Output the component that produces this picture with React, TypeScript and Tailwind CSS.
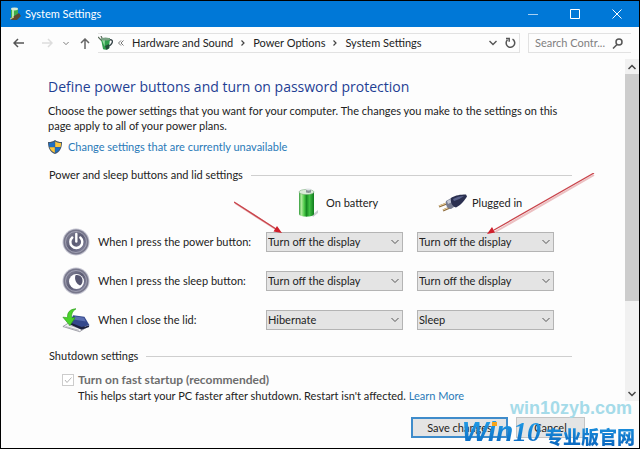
import { useState } from "react";
import type { ReactNode } from "react";

type Option = "Turn off the display" | "Sleep" | "Hibernate" | "Do nothing";

const options: Option[] = [
  "Turn off the display",
  "Sleep",
  "Hibernate",
  "Do nothing",
];

const BatteryIcon = ({ className }: { className?: string }) => (
  <svg viewBox="0 0 20 30" className={className} aria-hidden="true">
    <defs>
      <linearGradient id="cell" x1="0" x2="1">
        <stop offset="0" stopColor="#2f9a38" />
        <stop offset="0.15" stopColor="#b4eca0" />
        <stop offset="0.35" stopColor="#4cca48" />
        <stop offset="0.5" stopColor="#178a22" />
        <stop offset="0.7" stopColor="#3fc043" />
        <stop offset="1" stopColor="#0f7a1c" />
      </linearGradient>
    </defs>
    <path d="M14 27l6-5v3l-5 4z" fill="#c9ccd0" />
    <path d="M1 4v22c0 3.500 15 3.500 15 0V4z" fill="url(#cell)" />
    <ellipse cx="8.500" cy="4" rx="7.500" ry="2.600" fill="#dcebda" stroke="#7fae82" strokeWidth="0.600" />
    <path d="M8 1.500v2.500c0 1.200 5 1.200 5 0V1.500z" fill="#8a9299" />
    <ellipse cx="10.500" cy="1.500" rx="2.500" ry="1" fill="#dfe3e6" />
  </svg>
);

const PlugIcon = () => (
  <svg viewBox="0 0 30 18" className="h-[18px] w-[30px]" aria-hidden="true">
    <path d="M10 9L1 12.500M13 13L5 16.500" stroke="#8c6a3c" strokeWidth="2" />
    <path d="M10 8.500L1 12M13 12.500L5 16" stroke="#f0d8a4" strokeWidth="1" />
    <path d="M8 7l7-4 4 8-6 4c-4 0-6-5-5-8z" fill="#777c90" />
    <path d="M9 7l6-3 1 3-6 3z" fill="#c3c7d4" />
    <path d="M13 4c5-3 9-3.500 15-3.500l1 2c-2 3-5 8-11 11-4-1-6-6-5-9.500z" fill="#2b3050" />
    <path d="M15 5c4-2 7-3 11-3-3 2-6 4-10 5z" fill="#59618a" />
  </svg>
);

const RoundIcon = ({ children }: { children: ReactNode }) => (
  <svg viewBox="0 0 28 28" className="size-7" aria-hidden="true">
    <defs>
      <linearGradient id="disc" x1="0" y1="0" x2="1" y2="1">
        <stop offset="0" stopColor="#8a8a9c" />
        <stop offset="0.5" stopColor="#5b5b73" />
        <stop offset="1" stopColor="#8d8da6" />
      </linearGradient>
    </defs>
    <circle cx="14" cy="14" r="13.500" fill="#c3c3d0" />
    <circle cx="14" cy="14" r="12.500" fill="#77778b" />
    <circle cx="14" cy="14" r="10.500" fill="url(#disc)" stroke="#a9a9bb" strokeWidth="0.800" />
    {children}
  </svg>
);

const PowerIcon = () => (
  <RoundIcon>
    <path d="M10.300 9.500a6 6 0 1 0 8 0" fill="none" stroke="#fff" strokeWidth="2.400" strokeLinecap="round" />
    <path d="M14.300 6v7.500" stroke="#fff" strokeWidth="2.400" strokeLinecap="round" />
  </RoundIcon>
);

const SleepIcon = () => (
  <RoundIcon>
    <circle cx="14.500" cy="14.500" r="7.500" fill="#fff" />
    <path d="M13.500 8.200c4-1 7.500 2 7 6.300-.3 2.500-1.500 3.500-2.500 4-3.500-1.500-6-6-4.500-10.300z" fill="#565670" />
  </RoundIcon>
);

const LidIcon = () => (
  <svg viewBox="0 0 30 26" className="h-[26px] w-[30px]" aria-hidden="true">
    <path d="M1 20l8-5 17 6-7 4.500z" fill="#f4f4f6" stroke="#85858f" strokeWidth="0.800" />
    <path d="M4 20l14 4M7 18.500l14 4" stroke="#a5a5af" strokeWidth="0.800" />
    <path d="M8 15l17 5 4-1.500v2l-8 3-13-6z" fill="#1c2140" />
    <path d="M12 8l12 1.500 5.500 9-8.500 2-13-5z" fill="#34488c" />
    <path d="M14 9l9.500 1.500 2 4-13-2z" fill="#5a6eb0" />
    <path d="M15 1C8 1.500 5.500 5 6 10.500L1 10l7.500 9L14 10.500l-3.500.300C9.800 7 11 3.500 15 1z" fill="#4ad32c" stroke="#2a9c17" strokeWidth="0.700" />
  </svg>
);

const ShieldIcon = () => (
  <svg viewBox="0 0 14 14" className="size-[14px]" aria-hidden="true">
    <path d="M7 0c2 1.500 4 2 7 2 0 6-2 10-7 12C2 12 0 8 0 2c3 0 5-.5 7-2z" fill="#44566b" />
    <path d="M6.800 1.400V7H1.400C1 5.500 1 4.200 1 3c2.200 0 4-.5 5.800-1.600z" fill="#1c6fc4" />
    <path d="M7.200 1.400V7h5.400c.4-1.500.4-2.800.4-4-2.200 0-4-.5-5.800-1.600z" fill="#fbc63c" />
    <path d="M1.500 7.300h5.300v5.500C4 11.500 2.300 9.800 1.500 7.300z" fill="#fbc63c" />
    <path d="M12.500 7.300H7.200v5.500c2.800-1.300 4.500-3 5.300-5.500z" fill="#1c6fc4" />
  </svg>
);

const PowerOptionsIcon = () => (
  <svg viewBox="0 0 15 15" className="size-[15px]" aria-hidden="true">
    <path d="M0 1l4 4M3 0l2 4" stroke="#5a6a5a" strokeWidth="1.200" />
    <path d="M11 4c3-1 4 1 3 3s-3 3-4 3" fill="none" stroke="#39464a" strokeWidth="1.400" />
    <path d="M3 3l9-1-1 10c-1 2-5 2-6 1z" fill="#2f9e4c" />
    <path d="M4 4l3-.5-.5 7z" fill="#93dba0" />
    <ellipse cx="7.500" cy="3" rx="4.500" ry="1.500" fill="#79a183" />
    <path d="M7 10l4-2 .500 4-3 2z" fill="#23503a" />
  </svg>
);

const TitleIcon = () => (
  <svg viewBox="0 0 12 14" className="h-[14px] w-3" aria-hidden="true">
    <path d="M2 2v9c0 2 7 2 7 0V2z" fill="#3fae4d" />
    <path d="M3 3v8l2 1V3z" fill="#b5ebb0" />
    <ellipse cx="5.500" cy="2" rx="3.500" ry="1.400" fill="#d8ecd6" />
    <path d="M5 9l5-3 2 3-4 4H2z" fill="#5b4a32" />
    <path d="M1 12l4-2" stroke="#e2c184" />
  </svg>
);

const Chevron = ({ className }: { className?: string }) => (
  <svg viewBox="0 0 8 6" className={className} fill="none" stroke="currentColor" aria-hidden="true">
    <path d="M0.500 1L4 4.500 7.500 1" />
  </svg>
);

type ActionSelectProps = { label: string; initial: Option };

const ActionSelect = ({ label, initial }: ActionSelectProps) => {
  const [value, setValue] = useState<string>(initial);
  return (
    <div className="relative">
      <select
        aria-label={label}
        value={value}
        onChange={(e) => setValue(e.target.value)}
        className="block h-5 w-full appearance-none border border-[#b4b4b4] bg-[#e4e4e4] px-px text-[11px] leading-4 text-[#222]"
      >
        {options.map((option) => (
          <option key={option}>{option}</option>
        ))}
      </select>
      <Chevron className="pointer-events-none absolute top-[7px] right-1 h-[6px] w-2 text-[#555]" />
    </div>
  );
};

const rows: { label: string; icon: ReactNode; battery: Option; plugged: Option }[] = [
  {
    label: "When I press the power button:",
    icon: <PowerIcon />,
    battery: "Turn off the display",
    plugged: "Turn off the display",
  },
  {
    label: "When I press the sleep button:",
    icon: <SleepIcon />,
    battery: "Turn off the display",
    plugged: "Turn off the display",
  },
  {
    label: "When I close the lid:",
    icon: <LidIcon />,
    battery: "Hibernate",
    plugged: "Sleep",
  },
];

const TitleBar = () => (
  <header className="flex h-[26px] items-center bg-[#0078d7] pl-2 text-white">
    <TitleIcon />
    <h1 className="ml-1 flex-1">System Settings</h1>
    <button aria-label="Minimize" className="flex h-full w-11 items-center justify-center">
      <svg viewBox="0 0 10 10" className="size-[10px]" stroke="#a8d0f2">
        <path d="M0 5.500h10" />
      </svg>
    </button>
    <button aria-label="Maximize" className="flex h-full w-10 items-center justify-center">
      <svg viewBox="0 0 10 10" className="size-[10px]" fill="none" stroke="currentColor">
        <path d="M.5.5h9v9h-9z" />
      </svg>
    </button>
    <button aria-label="Close" className="flex h-full w-11 items-center justify-center">
      <svg viewBox="0 0 10 10" className="size-[10px]" stroke="currentColor">
        <path d="M.5.5l9 9M9.500.5l-9 9" />
      </svg>
    </button>
  </header>
);

const Arrow = ({ className, d = "M5 1L1 5l4 4M1 5h10" }: { className?: string; d?: string }) => (
  <svg viewBox="0 0 12 10" className={className} fill="none" stroke="currentColor" strokeWidth="1.500" aria-hidden="true">
    <path d={d} />
  </svg>
);

const Crumb = ({ children }: { children: ReactNode }) => (
  <a href="#" className="whitespace-nowrap">
    {children}
  </a>
);

const Separator = () => (
  <svg viewBox="0 0 4 6" className="mx-2 h-[6px] w-1" fill="none" stroke="#444" strokeWidth="1.200" aria-hidden="true">
    <path d="M.5.5L3 3 .5 5.500" />
  </svg>
);

const AddressBar = () => (
  <nav className="flex h-8 items-center pr-2 pl-3">
    <button aria-label="Back">
      <Arrow className="h-[10px] w-3 text-[#555]" />
    </button>
    <button aria-label="Forward" className="ml-4">
      <Arrow className="h-[10px] w-3 text-[#ddd]" d="M7 1l4 4-4 4M11 5H1" />
    </button>
    <button aria-label="Recent locations" className="ml-[10px]">
      <Chevron className="h-[5px] w-[6px] text-[#555]" />
    </button>
    <button aria-label="Up" className="ml-[11px]">
      <svg viewBox="0 0 10 11" className="h-[11px] w-[10px]" fill="none" stroke="#666" strokeWidth="1.500">
        <path d="M1 5l4-4 4 4M5 1v10" />
      </svg>
    </button>
    <div className="ml-2 flex h-5 min-w-0 flex-1 items-center border border-l-0 border-[#e2e2e2] pr-[3px]">
      <PowerOptionsIcon />
      <svg viewBox="0 0 6 6" className="mr-2 ml-[5px] size-[6px]" fill="none" stroke="#777" aria-hidden="true">
        <path d="M3 .5L.5 3 3 5.500M5.500.5L3 3l2.500 2.500" />
      </svg>
      <Crumb>Hardware and Sound</Crumb>
      <Separator />
      <Crumb>Power Options</Crumb>
      <Separator />
      <Crumb>System Settings</Crumb>
      <button aria-label="Previous locations" className="ml-auto">
        <svg viewBox="0 0 8 6" className="h-[6px] w-2" fill="none" stroke="#555" strokeWidth="1.400">
          <path d="M.5 1L4 4.500 7.500 1" />
        </svg>
      </button>
      <button aria-label="Refresh" className="ml-2">
        <svg viewBox="0 0 11 12" className="h-3 w-[11px]" fill="none" stroke="#555" strokeWidth="1.500">
          <path d="M7.500 2.200a4.300 4.300 0 1 1-5 .6M1 1.500h3.200v3.200" />
        </svg>
      </button>
    </div>
    <div className="ml-2 flex h-5 w-[103px] items-center border-y border-l border-[#e2e2e2] pr-2 pl-1">
      <input
        aria-label="Search Control Panel"
        placeholder="Search Contr..."
        className="min-w-0 flex-1 pl-[2px] outline-none placeholder:text-[#808080]"
      />
      <svg viewBox="0 0 11 11" className="size-[11px]" fill="none" stroke="#555" strokeWidth="1.500" aria-hidden="true">
        <circle cx="7" cy="4" r="3" />
        <path d="M5 6.500L1 10.500" />
      </svg>
    </div>
  </nav>
);

const Scrollbar = () => (
  <div className="mb-[6px] flex w-[14px] flex-col bg-[#f1f1f1]">
    <button aria-label="Scroll up" className="flex h-[15px] items-center justify-center text-[#444]">
      <Chevron className="h-[6px] w-2 rotate-180 stroke-[1.500]" />
    </button>
    <div className="h-[227px] bg-[#cdcdcd]" />
    <button aria-label="Scroll down" className="mt-auto flex h-[14px] items-center justify-center text-[#444]">
      <Chevron className="h-[6px] w-2 stroke-[1.500]" />
    </button>
  </div>
);

const SectionTitle = ({ children }: { children: ReactNode }) => (
  <h3 className="flex items-center gap-2 pl-px leading-4">
    {children}
    <span className="h-px flex-1 bg-[#cfcfcf]" />
  </h3>
);

// red pointers drawn over the table
const Pointers = () => (
  <svg
    viewBox="0 0 376 70"
    className="pointer-events-none absolute top-[-16px] left-[172px] h-[70px] w-[376px]"
    fill="none"
    aria-hidden="true"
  >
    <g stroke="#ecc0c2" strokeWidth="2">
      <path d="M1 30L43 57M360 2L261 59" />
    </g>
    <g stroke="#c9444b" strokeWidth="1.300">
      <path d="M0 29L42 56M360 0L260 57" />
    </g>
    <path d="M48 60l-8.500-1.500 3.500-5.500zM253 61l5-7 3 5.500z" fill="#d0202c" />
  </svg>
);

const Watermark = () => (
  <div className="pointer-events-none absolute right-1 bottom-0 flex flex-col items-end">
    <span className="pr-[3px] font-['Liberation_Sans',sans-serif] text-lg leading-4 font-bold text-[#a5dbe9]">
      win10zyb.com
    </span>
    <span className="relative flex items-end bg-linear-to-b from-[#25a6ee] to-[#0a62bb] bg-clip-text text-transparent">
      <span className="font-['Liberation_Sans',sans-serif] text-[28px] leading-8 font-bold italic">
        Win
      </span>
      <span className="pr-1 font-['Liberation_Serif',serif] text-[28px] leading-8 font-bold italic">
        10
      </span>
      <span className="font-['Noto_Sans_CJK_SC',sans-serif] text-lg leading-6 font-black">
        专业版官网
      </span>
      <span className="absolute top-[6px] left-[30px] h-1 w-[5px] bg-[#f8a51b]" />
    </span>
  </div>
);

const App = () => {
  return (
    <div className="relative flex min-h-screen flex-col border border-black bg-[#fdfdfd] font-['Lato',sans-serif] text-[11px] text-[#222]">
      <TitleBar />
      <AddressBar />
      <div className="flex">
        <main className="min-w-0 flex-1 pt-4 pr-[53px] pb-[3px] pl-[47px]">
          <h2 className="font-['Open_Sans',sans-serif] text-sm leading-6 text-[#1f3f94]">
            Define power buttons and turn on password protection
          </h2>
          <p className="mt-1 leading-[15px]">
            Choose the power settings that you want for your computer. The changes you make to the settings on this
            page apply to all of your power plans.
          </p>
          <a href="#" className="mt-[6px] flex items-center gap-[6px] leading-4 text-[#2a7ab8]">
            <ShieldIcon />
            Change settings that are currently unavailable
          </a>

          <section className="mt-3">
            <SectionTitle>Power and sleep buttons and lid settings</SectionTitle>
            <div className="relative mt-[6px] mr-[18px] ml-[14px] grid grid-cols-[204px_1fr_1fr] items-center gap-y-[11px]">
              <div />
              <div className="flex h-7 items-center gap-2 pl-8">
                <BatteryIcon className="h-[30px] w-5" />
                On battery
              </div>
              <div className="flex h-7 items-center gap-1 pl-7">
                <PlugIcon />
                Plugged in
              </div>
              {rows.map((row) => (
                <div key={row.label} className="col-span-3 grid h-7 grid-cols-subgrid items-center">
                  <div className="flex items-center gap-2">
                    <span className="flex w-7 justify-center">{row.icon}</span>
                    {row.label}
                  </div>
                  <div className="pr-[7px]">
                    <ActionSelect label={`${row.label} On battery`} initial={row.battery} />
                  </div>
                  <div className="pl-[7px]">
                    <ActionSelect label={`${row.label} Plugged in`} initial={row.plugged} />
                  </div>
                </div>
              ))}
              <Pointers />
            </div>
          </section>

          <section className="mt-[14px]">
            <SectionTitle>Shutdown settings</SectionTitle>
            <div className="mt-2 flex items-center gap-1 pl-[14px]">
              <span className="relative flex">
                <input
                  id="fast-startup"
                  type="checkbox"
                  checked
                  disabled
                  readOnly
                  className="size-3 appearance-none border border-[#ccc] bg-white"
                />
                <svg viewBox="0 0 12 12" className="absolute inset-0 size-3" fill="none" stroke="#b5b5b5">
                  <path d="M3 6l2 2.500 4.500-5" />
                </svg>
              </span>
              <label htmlFor="fast-startup" className="text-xs leading-4 font-bold text-[#6d6d6d]">
                Turn on fast startup (recommended)
              </label>
            </div>
            <p className="pl-[30px] leading-4">
              This helps start your PC faster after shutdown. Restart isn't affected.{" "}
              <a href="#" className="text-[#2a7ab8]">
                Learn More
              </a>
            </p>
          </section>
        </main>
        <Scrollbar />
      </div>

      <footer className="mt-auto flex gap-2 self-end pr-[54px] pb-[10px]">
        <button className="h-[21px] w-[97px] border-2 border-[#3f8ccb] bg-[#e4e4e4] leading-4">
          Save changes
        </button>
        <button className="h-[21px] w-[69px] border border-[#c4c4c4] bg-[#e4e4e4] leading-4">
          Cancel
        </button>
      </footer>
      <Watermark />
    </div>
  );
};

export default App;
